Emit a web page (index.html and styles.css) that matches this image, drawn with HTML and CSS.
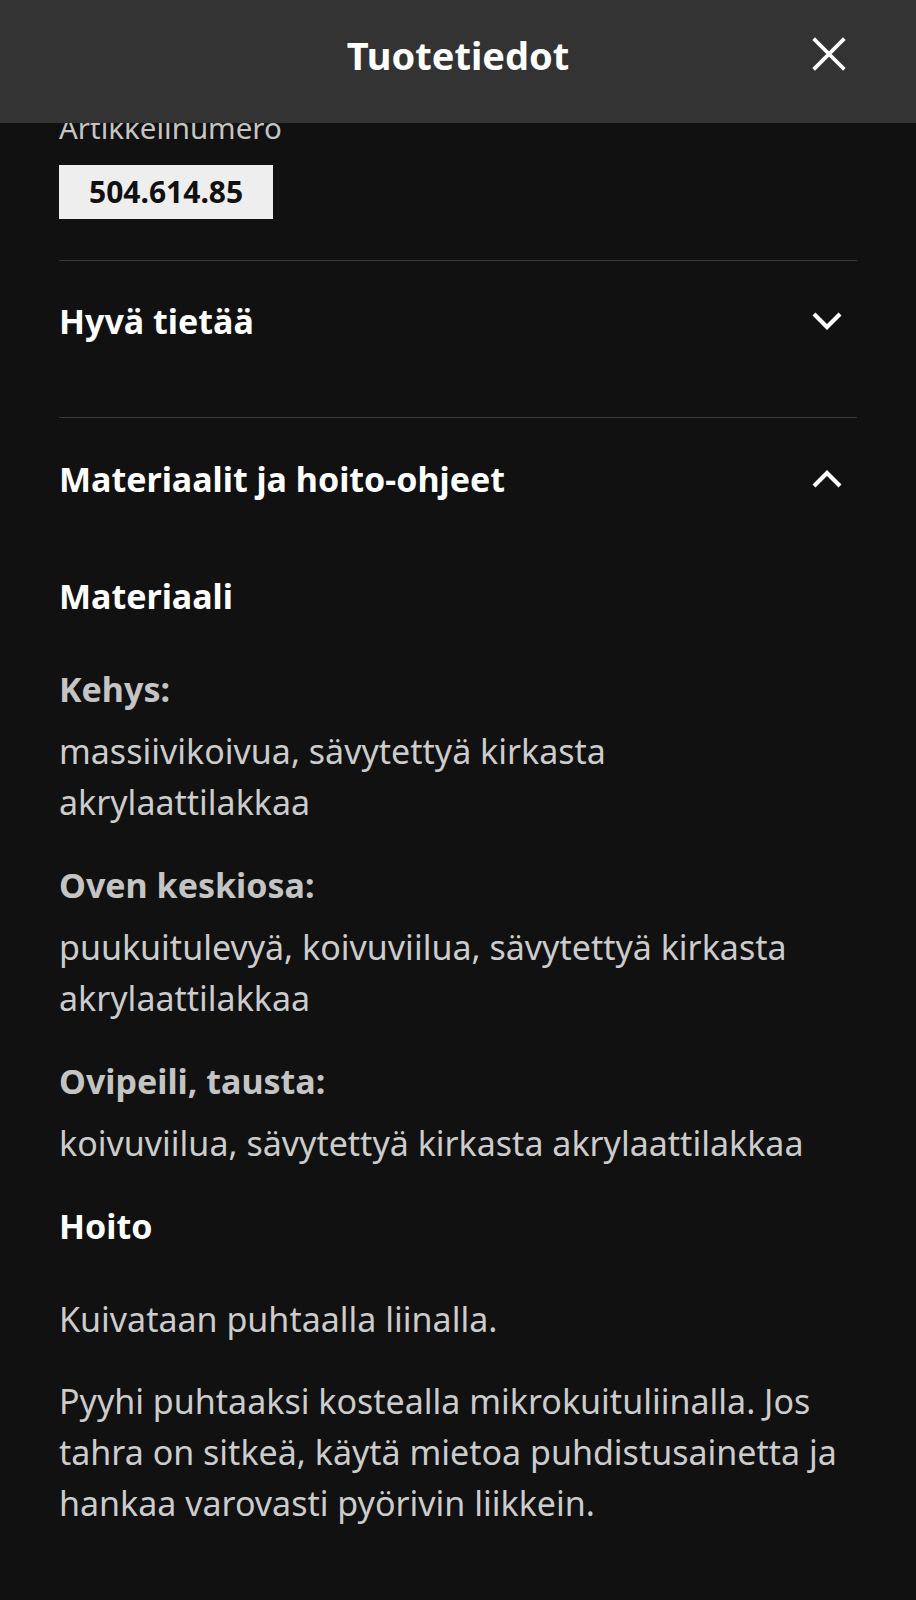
FILE: index.html
```html
<!DOCTYPE html>
<html>
<head>
  <meta charset="utf-8">
  <meta name="viewport" content="width=device-width">
  <title>Tuotetiedot</title>
  <link rel="stylesheet" href="styles.css">
</head>
<body>
  <div class="sheet-header">
    <h1>Tuotetiedot</h1>
    <button class="icon-btn close-btn" aria-label="Sulje">
      <svg width="34" height="34" viewBox="0 0 34 34"><path d="M3 3 L31 31 M31 3 L3 31" stroke="#fff" stroke-width="3.8" fill="none" stroke-linecap="square"/></svg>
    </button>
  </div>

  <div class="container">
    <div class="article">
      <div class="article-label">Artikkelinumero</div>
      <div class="article-number">504.614.85</div>
    </div>

    <div class="section">
      <div class="section-head">
        <h2>Hyvä tietää</h2>
        <span class="chevron">
          <svg width="32" height="22" viewBox="0 0 32 22"><path d="M3 4 L16 17 L29 4" stroke="#fff" stroke-width="4.2" fill="none"/></svg>
        </span>
      </div>
    </div>

    <div class="section open">
      <div class="section-head">
        <h2>Materiaalit ja hoito-ohjeet</h2>
        <span class="chevron">
          <svg width="32" height="22" viewBox="0 0 32 22"><path d="M3 18 L16 5 L29 18" stroke="#fff" stroke-width="4.2" fill="none"/></svg>
        </span>
      </div>

      <div class="section-body">
        <h3>Materiaali</h3>
        <div class="item">
          <div class="item-label">Kehys:</div>
          <p>massiivikoivua, sävytettyä kirkasta akrylaattilakkaa</p>
        </div>
        <div class="item">
          <div class="item-label">Oven keskiosa:</div>
          <p>puukuitulevyä, koivuviilua, sävytettyä kirkasta akrylaattilakkaa</p>
        </div>
        <div class="item">
          <div class="item-label">Ovipeili, tausta:</div>
          <p>koivuviilua, sävytettyä kirkasta akrylaattilakkaa</p>
        </div>

        <h3 class="care-title">Hoito</h3>
        <p class="care">Kuivataan puhtaalla liinalla.</p>
        <p class="care">Pyyhi puhtaaksi kostealla mikrokuituliinalla. Jos tahra on sitkeä, käytä mietoa puhdistusainetta ja hankaa varovasti pyörivin liikkein.</p>
      </div>
    </div>
  </div>
</body>
</html>
```

FILE: styles.css
```css
body {
  margin: 0;
  padding: 0;
  background-color: #111111;
  color: #cccccc;
  font-family: "Noto Sans", "Open Sans", sans-serif;
}

.sheet-header {
  position: fixed;
  top: 0;
  left: 0;
  right: 0;
  height: 123px;
  background-color: #333333;
  display: flex;
  align-items: center;
  justify-content: center;
  z-index: 2;
}

.sheet-header h1 {
  margin: 0;
  color: #ffffff;
  font-size: 38px;
  font-weight: 700;
  padding-bottom: 14px;
}

.icon-btn {
  background: none;
  border: none;
  padding: 0;
  cursor: pointer;
}

.close-btn {
  position: absolute;
  right: 70px;
  top: 37px;
  width: 34px;
  height: 34px;
}

.container {
  padding: 108px 59px 60px;
}

.article {
  padding-bottom: 41px;
  border-bottom: 1px solid #3a3a3a;
}

.article-label {
  font-size: 29.5px;
  line-height: 40px;
  color: #c4c4c4;
}

.article-number {
  display: inline-block;
  margin-top: 17px;
  background-color: #eeeeee;
  color: #111111;
  font-size: 30px;
  font-weight: 700;
  line-height: 54px;
  padding: 0 30px;
}

.section {
  border-bottom: 1px solid #3a3a3a;
}

.section.open {
  border-bottom: none;
}

.section-head {
  display: flex;
  align-items: center;
  justify-content: space-between;
  height: 119px;
  padding-bottom: 37px;
}

.section.open .section-head {
  height: 121px;
  padding-bottom: 0;
}

.section-head h2 {
  margin: 0;
  color: #ffffff;
  font-size: 34px;
  font-weight: 700;
}

.chevron {
  display: flex;
  margin-right: 14px;
}

.section-body h3 {
  margin: 32px 0 0;
  color: #ffffff;
  font-size: 34px;
  font-weight: 700;
  line-height: 50px;
}

.item {
  margin-top: 43px;
}

.item + .item {
  margin-top: 32px;
}

.item-label {
  color: #c4c4c4;
  font-size: 34px;
  font-weight: 700;
  line-height: 50px;
}

.section-body p {
  margin: 0;
  font-size: 34px;
  line-height: 51px;
  color: #cccccc;
}

.item p {
  margin-top: 12px;
}

.section-body .care-title {
  margin-top: 32px;
}

.section-body p.care {
  margin-top: 43px;
}

.section-body p.care + p.care {
  margin-top: 31px;
}
```
